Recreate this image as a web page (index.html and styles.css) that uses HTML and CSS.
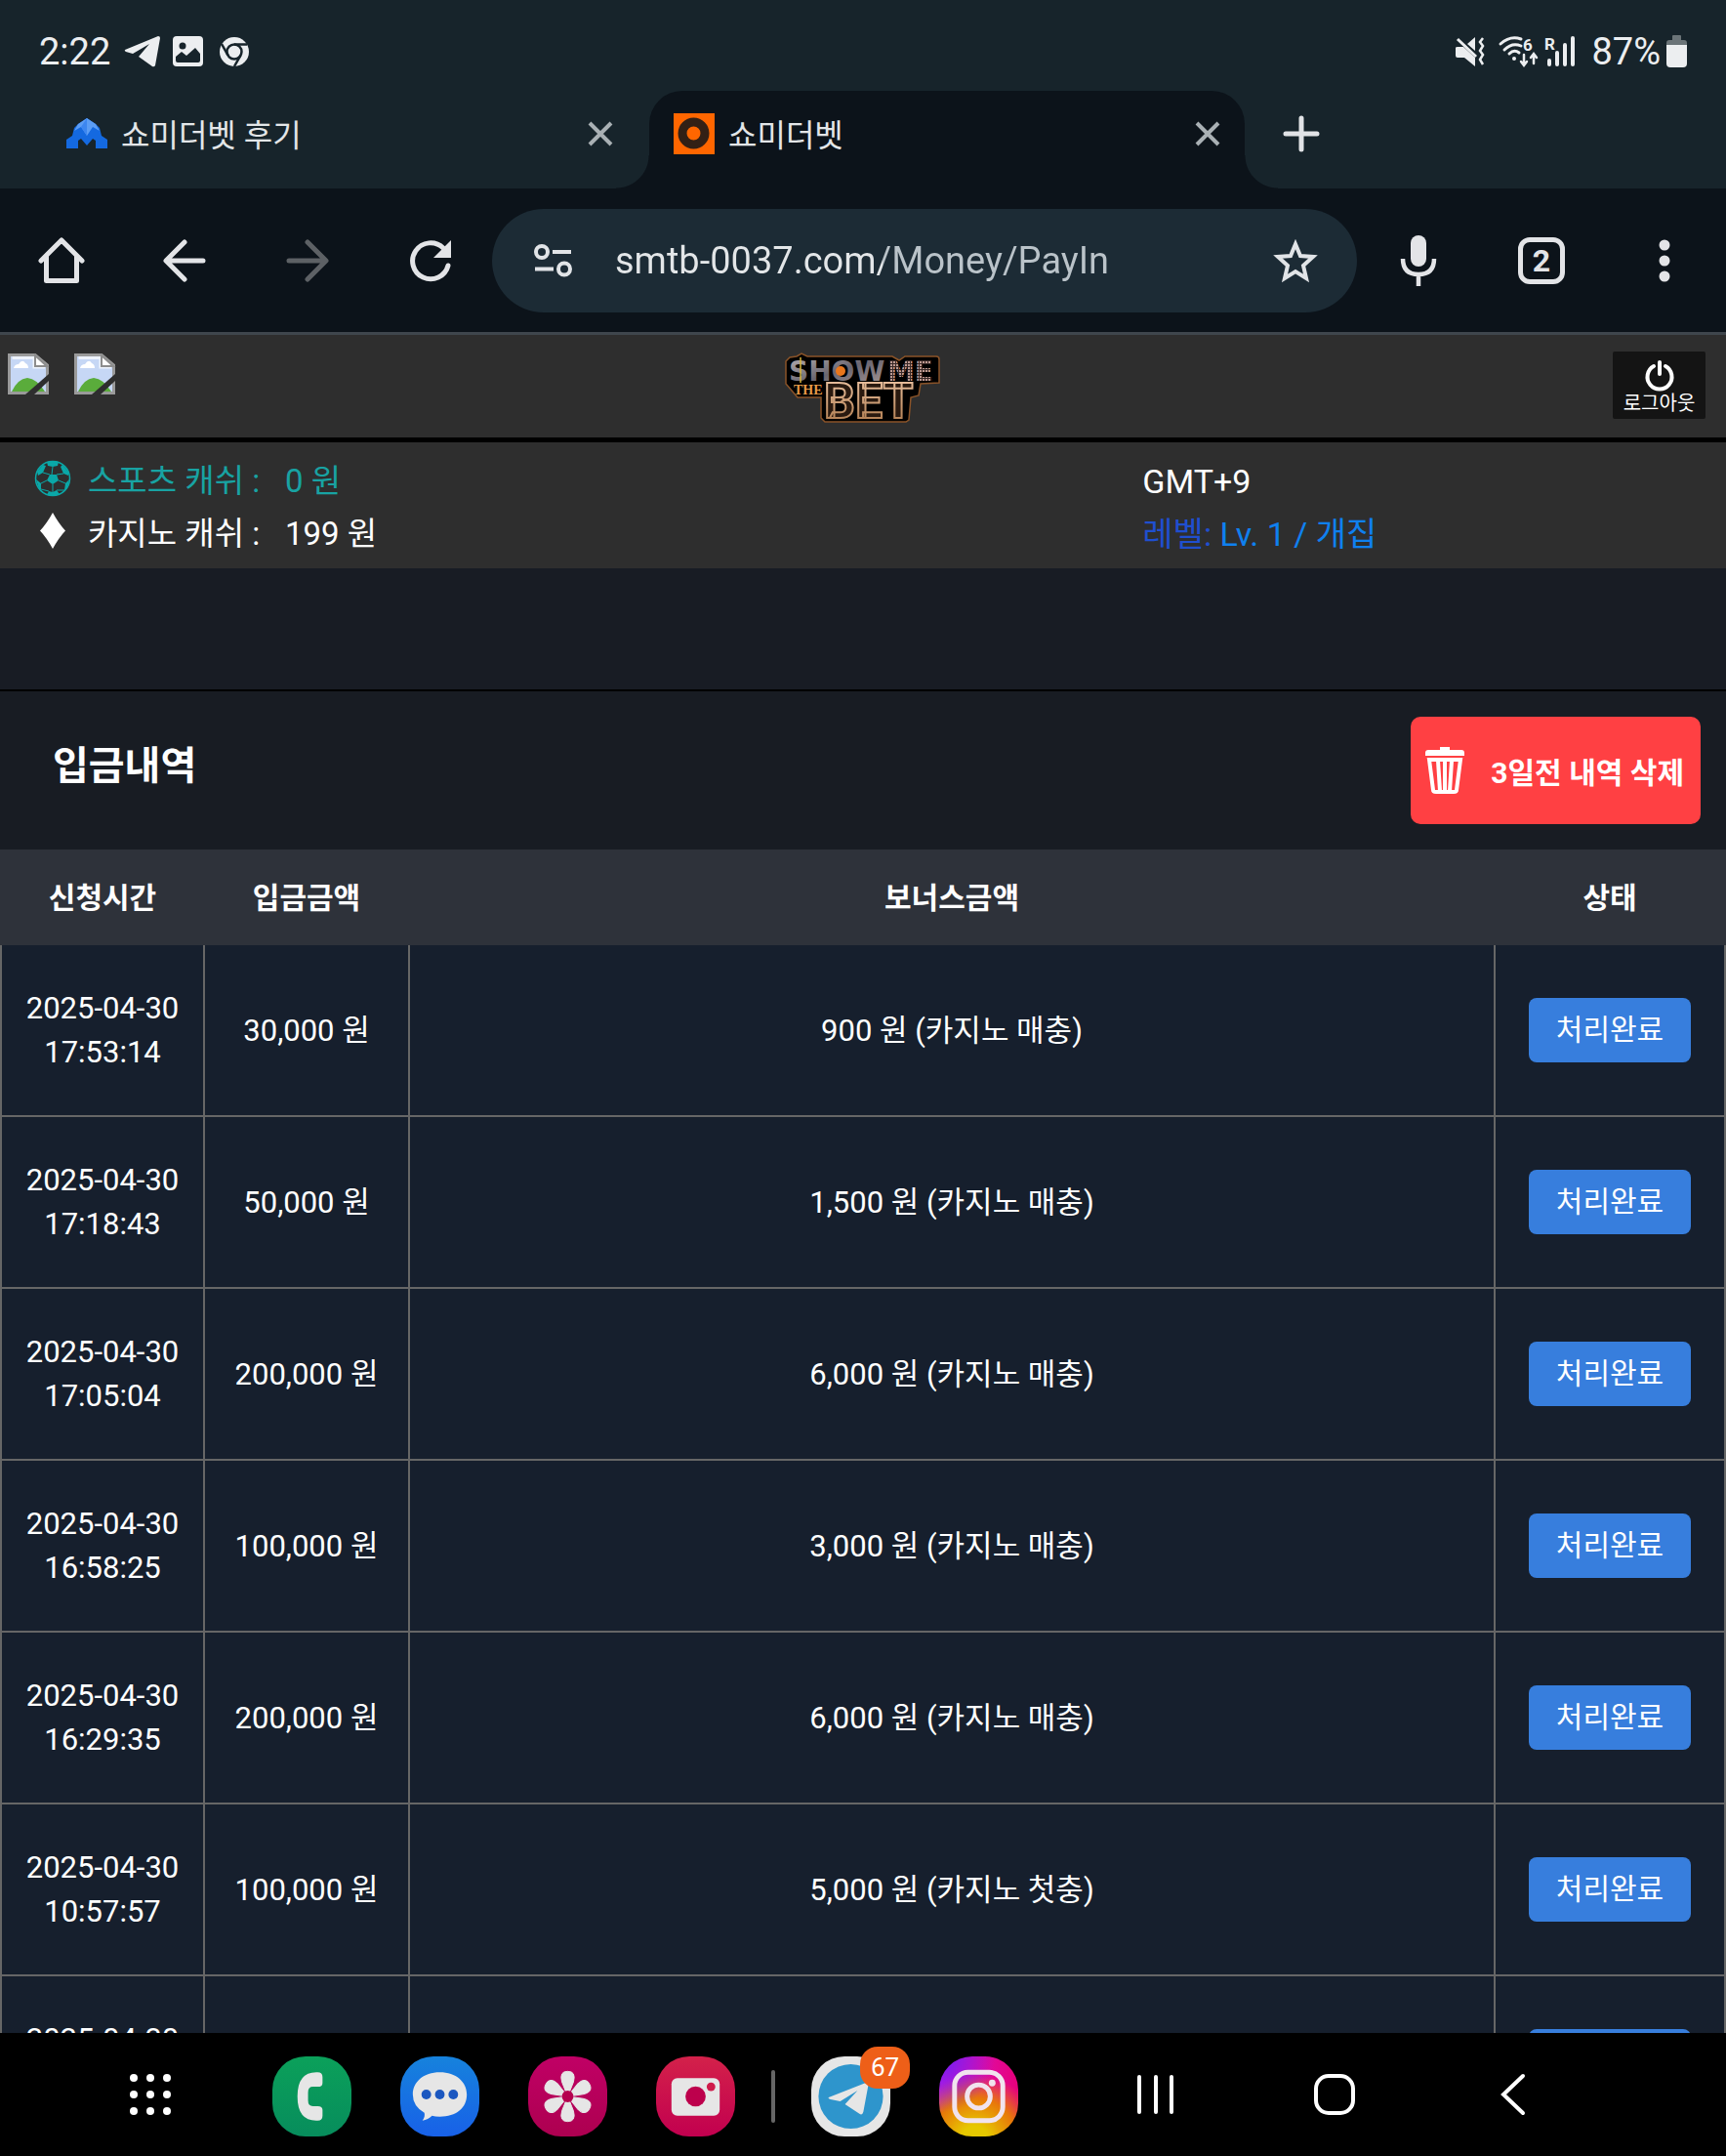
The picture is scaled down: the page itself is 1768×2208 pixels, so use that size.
FILE: index.html
```html
<!DOCTYPE html>
<html lang="ko">
<head>
<meta charset="utf-8">
<meta name="viewport" content="width=device-width, initial-scale=1">
<title>쇼미더벳</title>
<link rel="stylesheet" href="styles.css">
</head>
<body>
<header class="browser">
    <div class="status-bar">
        <span class="clock">2:22</span>
        <svg class="st-plane" width="37" height="32" viewBox="0 0 37 32"><path d="M1 14 L35 0 Q37 0 37 2 L32 30 Q31 32 29 31 L15 21 L26 8 L9 18 L2 16 Q0 15 1 14z" fill="#eceef0"/></svg>
        <svg class="st-photo" width="31" height="31" viewBox="0 0 31 31"><rect width="31" height="31" rx="4" fill="#eceef0"/><circle cx="10" cy="10" r="3.500" fill="#17242b"/><path d="M3 25 V21 L9 16 L14 20 L23 12 L28 18 V25 Q28 27 26 27 H5 Q3 27 3 25z" fill="#17242b"/></svg>
        <svg class="st-chrome" width="30" height="30" viewBox="0 0 30 30"><circle cx="15" cy="15" r="15" fill="#eceef0"/><circle cx="15" cy="15" r="7.500" fill="none" stroke="#17242b" stroke-width="2.500"/><path d="M15 7.500 H28 M8.500 18.700 L2 7 M21.500 18.700 L15 30" stroke="#17242b" stroke-width="2.500"/></svg>
        <div class="status-right">
            <svg width="30" height="30" viewBox="0 0 30 30"><path d="M0 11 Q0 10 2 10 H8 L20 21 V30 L9 21 H2 Q0 21 0 19z M20 0 V14 L12 7z" fill="#eceef0"/><path d="M2 2 L21 20" stroke="#eceef0" stroke-width="3"/><path d="M28 1 L25 5 L28 9 L25 14 L28 18 L25 23 L28 28" fill="none" stroke="#eceef0" stroke-width="2.500"/></svg>
            <svg class="st-wifi" width="42" height="32" viewBox="0 0 42 32"><g fill="none" stroke="#eceef0" stroke-width="3" stroke-linecap="round"><path d="M2 8 Q12 -1 23 3 M6 14 Q14 6 23 10 M11 18 Q16 13 21 17"/><path d="M26 19 V29 M23 26 L26 30 L29 26 M36 28 V19 M33 22 L36 18 L39 22" stroke-width="2.500"/></g><circle cx="16" cy="23" r="2" fill="#eceef0"/><text x="25" y="15" class="st-small">6</text></svg>
            <svg class="st-signal" width="32" height="32" viewBox="0 0 32 32"><path d="M5 25 V29 M13 17 V29 M21 9 V29 M29 2 V29" stroke="#eceef0" stroke-width="4" stroke-linecap="round"/><text x="0" y="14" class="st-small">R</text></svg>
            <span class="battery-level">87%</span>
            <svg class="st-battery" width="21" height="33" viewBox="0 0 21 33"><path d="M6 1 Q6 0 7 0 H14 Q15 0 15 1 V5 H18 Q21 5 21 8 V10 H0 V8 Q0 5 3 5 H6z" fill="#6b7478"/><path d="M0 10 H21 V29 Q21 33 17 33 H4 Q0 33 0 29z" fill="#eceef0"/></svg>
        </div>
    </div>

    <div class="tab-strip">
        <div class="tab">
            <svg width="42" height="42" viewBox="0 0 42 42"><path d="M0 36 V27 L6 23 L8 15 L12 11 L21 5 L30 11 L34 15 L36 23 L42 27 V36 H30 V28 L27 26 L21 33 L15 26 L12 28 V36z" fill="#1469e0"/><path d="M21 5 L12 11 L8 18 L15 14 L21 23 L27 14 L34 18 L30 11z" fill="#5b9df5"/><path d="M21 5 V23 L15 14z" fill="#3c86f0"/></svg>
            <span class="tab-title">쇼미더벳 후기</span>
            <button class="icon-btn" aria-label="탭 닫기"><svg width="26" height="26" viewBox="0 0 26 26"><path d="M2 2 L24 24 M24 2 L2 24" stroke="#a9b0b4" stroke-width="4"/></svg></button>
        </div>
        <div class="tab active">
            <svg width="42" height="42" viewBox="0 0 42 42"><rect width="42" height="42" fill="#ff6600"/><circle cx="20.500" cy="20.500" r="11.500" fill="none" stroke="#332015" stroke-width="9"/></svg>
            <span class="tab-title">쇼미더벳</span>
            <button class="icon-btn" aria-label="탭 닫기"><svg width="26" height="26" viewBox="0 0 26 26"><path d="M2 2 L24 24 M24 2 L2 24" stroke="#a9b0b4" stroke-width="4"/></svg></button>
        </div>
        <button class="icon-btn new-tab" aria-label="새 탭"><svg width="36" height="36" viewBox="0 0 36 36"><path d="M18 2 V34 M2 18 H34" stroke="#e1e3e6" stroke-width="5" stroke-linecap="round"/></svg></button>
    </div>

    <div class="toolbar">
        <button class="tool" aria-label="홈"><svg width="48" height="48" viewBox="0 0 48 48"><path d="M3 24 L24 3 L45 24 M8.500 20 V44.500 H39.500 V20" fill="none" stroke="#e3e4e7" stroke-width="5" stroke-linecap="round" stroke-linejoin="round"/></svg></button>
        <button class="tool" aria-label="뒤로"><svg width="44" height="44" viewBox="0 0 44 44"><path d="M41 22 H4 M22 3 L3 22 L22 41" fill="none" stroke="#e3e4e7" stroke-width="5" stroke-linecap="round" stroke-linejoin="round"/></svg></button>
        <button class="tool" aria-label="앞으로" disabled><svg width="44" height="44" viewBox="0 0 44 44"><path d="M3 22 H40 M22 3 L41 22 L22 41" fill="none" stroke="#5d6165" stroke-width="5" stroke-linecap="round" stroke-linejoin="round"/></svg></button>
        <button class="tool" aria-label="새로고침"><svg width="44" height="44" viewBox="0 0 44 44"><path d="M40 27 A18.500 18.500 0 1 1 35 9" fill="none" stroke="#e3e4e7" stroke-width="5" stroke-linecap="round"/><path d="M43 1 V19 H25z" fill="#e3e4e7"/></svg></button>
        <div class="omnibox">
            <svg width="40" height="34" viewBox="0 0 40 34"><g fill="none" stroke="#e1e4e7" stroke-width="4"><circle cx="8" cy="8" r="6"/><circle cx="31" cy="25.500" r="6"/><path d="M19 8 H38 M1 25.500 H20"/></g></svg>
            <input class="url" type="text" aria-label="주소" value="smtb-0037.com/Money/PayIn">
            <button class="icon-btn" aria-label="북마크"><svg width="46" height="44" viewBox="0 0 46 44"><path d="M23 5 L28 17 L41 18 L31 27 L34 40 L23 33 L12 40 L15 27 L5 18 L18 17z" fill="none" stroke="#e1e4e7" stroke-width="4"/></svg></button>
        </div>
        <button class="tool" aria-label="음성 검색"><svg width="38" height="52" viewBox="0 0 38 52"><rect x="11" y="0" width="16" height="32" rx="8" fill="#e3e4e7"/><path d="M3 24 Q3 40 19 40 Q35 40 35 24 M19 40 V52" fill="none" stroke="#e3e4e7" stroke-width="4.500"/></svg></button>
        <button class="tool" aria-label="탭 2개"><span class="tab-count">2</span></button>
        <button class="tool" aria-label="메뉴"><svg width="12" height="44" viewBox="0 0 12 44"><g fill="#e3e4e7"><circle cx="6" cy="6" r="5.500"/><circle cx="6" cy="22" r="5.500"/><circle cx="6" cy="38" r="5.500"/></g></svg></button>
    </div>
</header>

<main class="page">
    <div class="top-bar">
        <div class="top-links">
            <svg width="42" height="42" viewBox="0 0 42 42"><path d="M1.500 1.500 H28 L40.500 12 V40.500 H1.500z" fill="#c6d7f5" stroke="#9a9a9a" stroke-width="3"/><path d="M4.500 4.500 H27 V14 H38" fill="none" stroke="#eef3fc" stroke-width="3"/><path d="M28 2 L40 13 H28z" fill="#fff" stroke="#8d8d8d" stroke-width="2"/><path d="M6 15 Q7 11 11 11 Q15 5 18 10 Q21 11 21 15z" fill="#fff"/><path d="M4 39 Q10 26 20 25 Q30 26 38 39z" fill="#5aac3b"/><path d="M18 42 L42 21 V28 L27 42z" fill="#2e2e2e"/></svg>
            <svg width="42" height="42" viewBox="0 0 42 42"><path d="M1.500 1.500 H28 L40.500 12 V40.500 H1.500z" fill="#c6d7f5" stroke="#9a9a9a" stroke-width="3"/><path d="M4.500 4.500 H27 V14 H38" fill="none" stroke="#eef3fc" stroke-width="3"/><path d="M28 2 L40 13 H28z" fill="#fff" stroke="#8d8d8d" stroke-width="2"/><path d="M6 15 Q7 11 11 11 Q15 5 18 10 Q21 11 21 15z" fill="#fff"/><path d="M4 39 Q10 26 20 25 Q30 26 38 39z" fill="#5aac3b"/><path d="M18 42 L42 21 V28 L27 42z" fill="#2e2e2e"/></svg>
        </div>
        <svg class="logo" width="160" height="72" viewBox="0 0 160 72">
            <defs>
                <linearGradient id="silver" x1="0" y1="0" x2="1" y2="1"><stop offset="0" stop-color="#b9b2b5"/><stop offset="0.500" stop-color="#6a6570"/><stop offset="1" stop-color="#a89a98"/></linearGradient>
                <linearGradient id="copper" x1="0" y1="0" x2="0" y2="1"><stop offset="0" stop-color="#f0c8a8"/><stop offset="1" stop-color="#a87446"/></linearGradient>
                <pattern id="mesh" width="3" height="3" patternUnits="userSpaceOnUse"><rect width="3" height="3" fill="#3a2a28"/><rect width="2" height="2" fill="#bd9a92"/></pattern>
            </defs>
            <path d="M1 9 L5 5 L12 4 L17 1 L23 4 H110 L117 8 L123 4 H155 Q158 4 158 7 V31 L139 32 L137 44 L129 46 L127 69 L124 71 H41 L37 67 V46 H13 L1 32z" fill="#000" stroke="#8a5328" stroke-width="1.500"/>
            <text class="logo-show" x="4" y="29">SHOW</text>
            <circle cx="57" cy="19" r="5" fill="#e8761c"/>
            <path d="M16 5 V31" stroke="#d9b43a" stroke-width="1.500"/>
            <text class="logo-me" x="105" y="29">ME</text>
            <text class="logo-the" x="9" y="43">THE</text>
            <text class="logo-bet" x="40" y="67">BET</text>
        </svg>
        <a class="logout" href="#">
            <svg width="30" height="32" viewBox="0 0 30 32"><path d="M9 6 A12.500 12.500 0 1 0 21 6" fill="none" stroke="#fff" stroke-width="4" stroke-linecap="round"/><path d="M15 2 V14" stroke="#fff" stroke-width="4" stroke-linecap="round"/></svg>
            <span>로그아웃</span>
        </a>
    </div>

    <div class="account">
        <div class="cash">
            <div class="cash-row sports">
                <svg width="38" height="38" viewBox="0 0 38 38"><circle cx="19" cy="19" r="17.500" fill="none" stroke="#0aa8a8" stroke-width="1.500"/><g fill="#0aa8a8"><path d="M16 15 L23 15 L25 21 L19 25 L13 21z M13 2 Q19 0 25 2 L24 6 L19 7 L14 6z M3 12 L9 5 L12 6 L9 13 L4 16z M35 12 L29 5 L27 7 L30 14 L35 16z M2 20 L7 24 L7 30 L5 30z M36 20 L32 24 L31 31 L34 29z M13 36 L15 32 L19 33 L23 31 L26 35 Q19 38 13 36z"/></g><path d="M16 15 L9 13 M23 15 L30 14 M19 7 L18 15 M25 21 L32 24 M19 25 V33 M13 21 L7 24 M7 30 L15 32 M23 31 L31 31" stroke="#0aa8a8" stroke-width="1" fill="none"/></svg>
                <span class="cash-label">스포츠 캐쉬 :</span><span>0 원</span>
            </div>
            <div class="cash-row">
                <svg width="38" height="38" viewBox="0 0 38 38"><path d="M19 0 Q25 11 32 18.500 Q25 26 19 37 Q13 26 6 18.500 Q13 11 19 0z" fill="#fff"/></svg>
                <span class="cash-label">카지노 캐쉬 :</span><span>199 원</span>
            </div>
        </div>
        <div class="member">
            <div>GMT+9</div>
            <div class="level"><span class="level-label">레벨:</span> Lv. 1 / 개집</div>
        </div>
    </div>

    <div class="notice"></div>

    <div class="list-head">
        <h1>입금내역</h1>
        <button class="btn-delete">
            <svg width="40" height="50" viewBox="0 0 40 50"><path d="M15 4 V1 H25 V4 H37 Q40 4 40 7 V10 H0 V7 Q0 4 3 4z" fill="#fff"/><path d="M4 14 L8 45 Q8 47 11 47 H29 Q32 47 32 45 L36 14z" fill="none" stroke="#fff" stroke-width="4"/><path d="M13 15 L15 46 M20 15 V46 M27 15 L25 46" stroke="#fff" stroke-width="4"/></svg>
            <span>3일전 내역 삭제</span>
        </button>
    </div>

    <table class="history">
        <colgroup><col class="col-time"><col class="col-amount"><col><col class="col-state"></colgroup>
        <thead>
            <tr><th>신청시간</th><th>입금금액</th><th>보너스금액</th><th>상태</th></tr>
        </thead>
        <tbody>
            <tr><td>2025-04-30<br>17:53:14</td><td>30,000 원</td><td>900 원 (카지노 매충)</td><td><span class="state">처리완료</span></td></tr>
            <tr><td>2025-04-30<br>17:18:43</td><td>50,000 원</td><td>1,500 원 (카지노 매충)</td><td><span class="state">처리완료</span></td></tr>
            <tr><td>2025-04-30<br>17:05:04</td><td>200,000 원</td><td>6,000 원 (카지노 매충)</td><td><span class="state">처리완료</span></td></tr>
            <tr><td>2025-04-30<br>16:58:25</td><td>100,000 원</td><td>3,000 원 (카지노 매충)</td><td><span class="state">처리완료</span></td></tr>
            <tr><td>2025-04-30<br>16:29:35</td><td>200,000 원</td><td>6,000 원 (카지노 매충)</td><td><span class="state">처리완료</span></td></tr>
            <tr><td>2025-04-30<br>10:57:57</td><td>100,000 원</td><td>5,000 원 (카지노 첫충)</td><td><span class="state">처리완료</span></td></tr>
            <tr><td>2025-04-30<br>&nbsp;</td><td></td><td></td><td><span class="state">처리완료</span></td></tr>
        </tbody>
    </table>
</main>

<footer class="taskbar">
    <button class="icon-btn apps" aria-label="앱 목록"><svg width="42" height="42" viewBox="0 0 42 42"><g fill="#fff"><circle cx="4" cy="4" r="4"/><circle cx="21" cy="4" r="4"/><circle cx="38" cy="4" r="4"/><circle cx="4" cy="21" r="4"/><circle cx="21" cy="21" r="4"/><circle cx="38" cy="21" r="4"/><circle cx="4" cy="38" r="4"/><circle cx="21" cy="38" r="4"/><circle cx="38" cy="38" r="4"/></g></svg></button>
    <div class="dock">
        <button class="app phone" aria-label="전화"><svg viewBox="0 0 82 82"><path d="M47 16 Q52 16 52 21 V27 Q52 31 47 31 H42 Q37 31 37 37 V45 Q37 51 42 51 H47 Q52 51 52 55 V61 Q52 66 47 66 Q26 67 26 41 Q26 15 47 16z" fill="#e6e6e6"/></svg></button>
        <button class="app message" aria-label="메시지"><svg viewBox="0 0 82 82"><path d="M41 16 C58 16 69 26 69 39 C69 53 58 62 41 62 Q36 62 33 61 Q29 65 23 66 Q26 62 25 58 Q13 51 13 39 C13 26 24 16 41 16z" fill="#e6e6e6"/><g fill="#1b57c0"><circle cx="27" cy="39" r="5"/><circle cx="41" cy="39" r="5"/><circle cx="55" cy="39" r="5"/></g></svg></button>
        <button class="app gallery" aria-label="갤러리"><svg viewBox="0 0 82 82"><defs><path id="petal" d="M41 41 L35 26 Q32 15 41 15 Q50 15 47 26z"/></defs><g fill="#e6e6e6" stroke="#e6e6e6" stroke-width="1"><use href="#petal"/><use href="#petal" transform="rotate(60 41 41)"/><use href="#petal" transform="rotate(120 41 41)"/><use href="#petal" transform="rotate(180 41 41)"/><use href="#petal" transform="rotate(240 41 41)"/><use href="#petal" transform="rotate(300 41 41)"/></g><circle cx="41" cy="41" r="6" fill="#b5004e"/></svg></button>
        <button class="app camera" aria-label="카메라"><svg viewBox="0 0 82 82"><rect x="16" y="22" width="50" height="39" rx="6" fill="#e6e6e6"/><circle cx="41" cy="41" r="10.500" fill="#bd004c"/><circle cx="57" cy="31" r="4.500" fill="#cf1c4b"/></svg></button>
        <span class="dock-line"></span>
        <button class="app telegram" aria-label="텔레그램"><svg viewBox="0 0 82 82"><circle cx="41" cy="41" r="33.500" fill="#2e95cc"/><path d="M18 42 L56 27 Q60 26 59 30 L54 57 Q53 61 50 59 L35 49 L48 35 L30 46 L20 44 Q17 43 18 42z" fill="#e6e6e6"/></svg><span class="badge">67</span></button>
        <button class="app instagram" aria-label="인스타그램"><svg viewBox="0 0 82 82"><g fill="none" stroke="#f1e3ee" stroke-width="5"><rect x="16" y="16" width="50" height="50" rx="14"/><circle cx="41" cy="41" r="12"/></g><circle cx="55" cy="27" r="3.500" fill="#f1e3ee"/></svg></button>
    </div>
    <nav class="nav-keys">
        <button aria-label="최근 앱"><svg width="42" height="42" viewBox="0 0 42 42"><path d="M4 3 V39 M21 3 V39 M37 3 V39" stroke="#fff" stroke-width="4" stroke-linecap="round"/></svg></button>
        <button aria-label="홈"><svg width="42" height="42" viewBox="0 0 42 42"><rect x="2" y="2" width="38" height="38" rx="13" fill="none" stroke="#fff" stroke-width="4"/></svg></button>
        <button aria-label="뒤로"><svg width="42" height="42" viewBox="0 0 42 42"><path d="M31 2 L11 21 L31 40" fill="none" stroke="#fff" stroke-width="4" stroke-linecap="round"/></svg></button>
    </nav>
</footer>
</body>
</html>
```
FILE: styles.css
```css
* {
    box-sizing: border-box;
}
body {
    margin: 0;
    height: 100vh;
    display: flex;
    flex-direction: column;
    overflow: hidden;
    background: #181c24;
    color: #fff;
    font-family: Roboto, "Noto Sans CJK KR", sans-serif;
    font-size: 32px;
}
button {
    padding: 0;
    border: 0;
    background: none;
    color: inherit;
    font-family: inherit;
}
svg {
    display: block;
    flex-shrink: 0;
    overflow: visible;
}
.icon-btn {
    display: flex;
}

/* browser */
.browser {
    flex-shrink: 0;
    background: #17242b;
    border-bottom: 3px solid #3f464d;
}
.status-bar {
    height: 93px;
    padding: 12px 40px 0;
    display: flex;
    align-items: center;
    color: #eceef0;
    font-size: 38px;
}
.st-plane {
    margin-left: 14px;
}
.st-photo {
    margin-left: 13px;
}
.st-chrome {
    margin-left: 17px;
}
.status-right {
    margin-left: auto;
    display: flex;
    align-items: center;
}
.st-wifi {
    margin-left: 14px;
}
.st-signal {
    margin: 0 16px 0 5px;
}
.st-battery {
    margin-left: 6px;
}
.st-small {
    font-size: 17px;
    font-weight: bold;
    fill: #eceef0;
}
.tab-strip {
    height: 100px;
    padding-left: 43px;
    display: flex;
    gap: 12px;
}
.tab {
    position: relative;
    flex: 0 1 610px;
    display: flex;
    align-items: center;
    gap: 14px;
    padding: 0 25px 12px;
    color: #e3e6e8;
}
.tab.active {
    background: #0c131a;
    border-radius: 34px 34px 0 0;
}
.tab.active::before,
.tab.active::after {
    content: "";
    position: absolute;
    bottom: 0;
    width: 34px;
    height: 34px;
}
.tab.active::before {
    left: -34px;
    background: radial-gradient(circle at 0 0, transparent 33px, #0c131a 34px);
}
.tab.active::after {
    right: -34px;
    background: radial-gradient(circle at 100% 0, transparent 33px, #0c131a 34px);
}
.tab-title {
    flex: 1;
    padding-bottom: 3px;
    white-space: nowrap;
    overflow: hidden;
}
.new-tab {
    align-items: center;
    padding: 0 40px 12px 28px;
}
.toolbar {
    height: 147px;
    display: flex;
    align-items: center;
    background: #0c131a;
}
.tool {
    flex: 0 0 126px;
    height: 126px;
    display: flex;
    align-items: center;
    justify-content: center;
}
.omnibox {
    flex: 1;
    min-width: 0;
    height: 106px;
    padding: 0 40px 0 43px;
    display: flex;
    align-items: center;
    border-radius: 53px;
    background: #1c2b35;
}
.url {
    flex: 1;
    min-width: 0;
    margin: 0 24px 0 43px;
    padding: 0;
    border: 0;
    outline: 0;
    font-family: Roboto, sans-serif;
    font-size: 38px;
    /* host is brighter than the path */
    background: linear-gradient(to right, #e3e6e8 274px, #bac3c9 274px);
    background-clip: text;
    -webkit-background-clip: text;
    color: transparent;
}
.tab-count {
    width: 48px;
    height: 48px;
    border: 5px solid #e3e4e7;
    border-radius: 12px;
    line-height: 38px;
    font-size: 32px;
    font-weight: bold;
    color: #e3e4e7;
}

/* site */
.page {
    flex: 1;
    min-height: 0;
    overflow: hidden;
}
.top-bar {
    height: 110px;
    display: grid;
    grid-template-columns: 1fr auto 1fr;
    align-items: start;
    background: #2e2e2e;
    border-bottom: 5px solid #000;
}
.top-links {
    display: flex;
    gap: 26px;
    padding: 19px 8px;
}
.logo {
    margin-top: 18px;
}
.logo-show,
.logo-me {
    font-family: "DejaVu Sans", sans-serif;
    font-size: 28px;
    font-weight: bold;
}
.logo-show {
    fill: url(#silver);
}
.logo-me {
    fill: url(#mesh);
}
.logo-the {
    font-family: "Liberation Serif", serif;
    font-size: 14px;
    font-weight: bold;
    fill: #e59a48;
}
.logo-bet {
    font-size: 50px;
    font-weight: bold;
    fill: #2a1a10;
    stroke: url(#copper);
    stroke-width: 2;
}
.logout {
    justify-self: end;
    width: 95px;
    height: 69px;
    margin: 17px 21px 0 0;
    padding-top: 9px;
    display: flex;
    flex-direction: column;
    align-items: center;
    border-radius: 2px;
    background: #141414;
    color: #fff;
    font-size: 20px;
    line-height: 24px;
    text-decoration: none;
}
.account {
    height: 129px;
    padding: 13px 30px 0 35px;
    display: grid;
    grid-template-columns: 2fr 1fr;
    background: #2e2e2e;
    font-size: 33px;
    line-height: 54px;
}
.cash-row {
    display: flex;
    align-items: center;
}
.cash-row svg {
    margin-bottom: 6px;
}
.sports {
    color: #18a3a3;
}
.cash-label {
    width: 202px;
    margin-left: 17px;
}
.member {
    font-size: 34px;
}
.level {
    color: #0f80ef;
}
.level-label {
    color: #1f4fd0;
}
.notice {
    height: 126px;
    background: #181c24;
    border-bottom: 2px solid #000;
}
.list-head {
    height: 162px;
    padding: 0 26px 0 54px;
    display: flex;
    align-items: center;
    justify-content: space-between;
    background: #181c23;
}
.list-head h1 {
    margin: 0 0 16px;
    font-size: 40px;
}
.btn-delete {
    height: 110px;
    padding: 0 17px 0 15px;
    display: flex;
    align-items: center;
    gap: 27px;
    border-radius: 10px;
    background: #ff4043;
    font-size: 30px;
    font-weight: bold;
}
.history {
    width: 100%;
    table-layout: fixed;
    border-collapse: collapse;
    font-size: 31px;
    line-height: 45px;
    text-align: center;
}
.col-time {
    width: 208px;
}
.col-amount {
    width: 210px;
}
.col-state {
    width: 236px;
}
.history th {
    height: 96px;
    padding: 0;
    border: 2px solid #2e323a;
    background: #2e323a;
    font-size: 30px;
}
.history td {
    height: 176px;
    padding: 0;
    border: 2px solid #666;
    background: #161f2d;
}
.history tbody tr:first-child td {
    border-top: 0;
}
.state {
    display: inline-block;
    width: 166px;
    height: 66px;
    border-radius: 8px;
    background: #377edd;
    font-size: 30px;
    line-height: 66px;
    vertical-align: middle;
}

/* system bar */
.taskbar {
    flex-shrink: 0;
    height: 126px;
    padding: 0 127px 0 133px;
    display: flex;
    align-items: center;
    background: #000;
}
.dock {
    margin: 4px 0 0 104px;
    display: flex;
    align-items: center;
    gap: 50px;
}
.app {
    position: relative;
    width: 81px;
    height: 82px;
    border-radius: 34px;
}
.app svg {
    width: 100%;
    height: 100%;
}
.phone {
    background: linear-gradient(#0ba05a, #078d5c);
}
.message {
    background: linear-gradient(#1682dc, #1861e8);
}
.gallery {
    background: linear-gradient(#c00065, #ad0050);
}
.camera {
    background: linear-gradient(#d3214a, #c2004f);
}
.telegram {
    background: #e6e6e6;
}
.instagram {
    background:
        radial-gradient(circle at 0 0, #6a1cf5, transparent 50%),
        radial-gradient(circle at 45% 105%, #e6c800 15%, #e8770a 45%, transparent 70%),
        linear-gradient(to right, #d81ad8, #e6007a);
}
.dock-line {
    width: 4px;
    height: 54px;
    margin: 0 -13px;
    border-radius: 2px;
    background: #666;
}
.badge {
    position: absolute;
    top: -10px;
    right: -20px;
    width: 51px;
    height: 43px;
    border-radius: 18px;
    background: #ee5f18;
    color: #fff;
    font-size: 26px;
    line-height: 43px;
}
.nav-keys {
    margin-left: auto;
    display: flex;
}
.nav-keys button {
    width: 183px;
    height: 126px;
    display: flex;
    align-items: center;
    justify-content: center;
}
```
